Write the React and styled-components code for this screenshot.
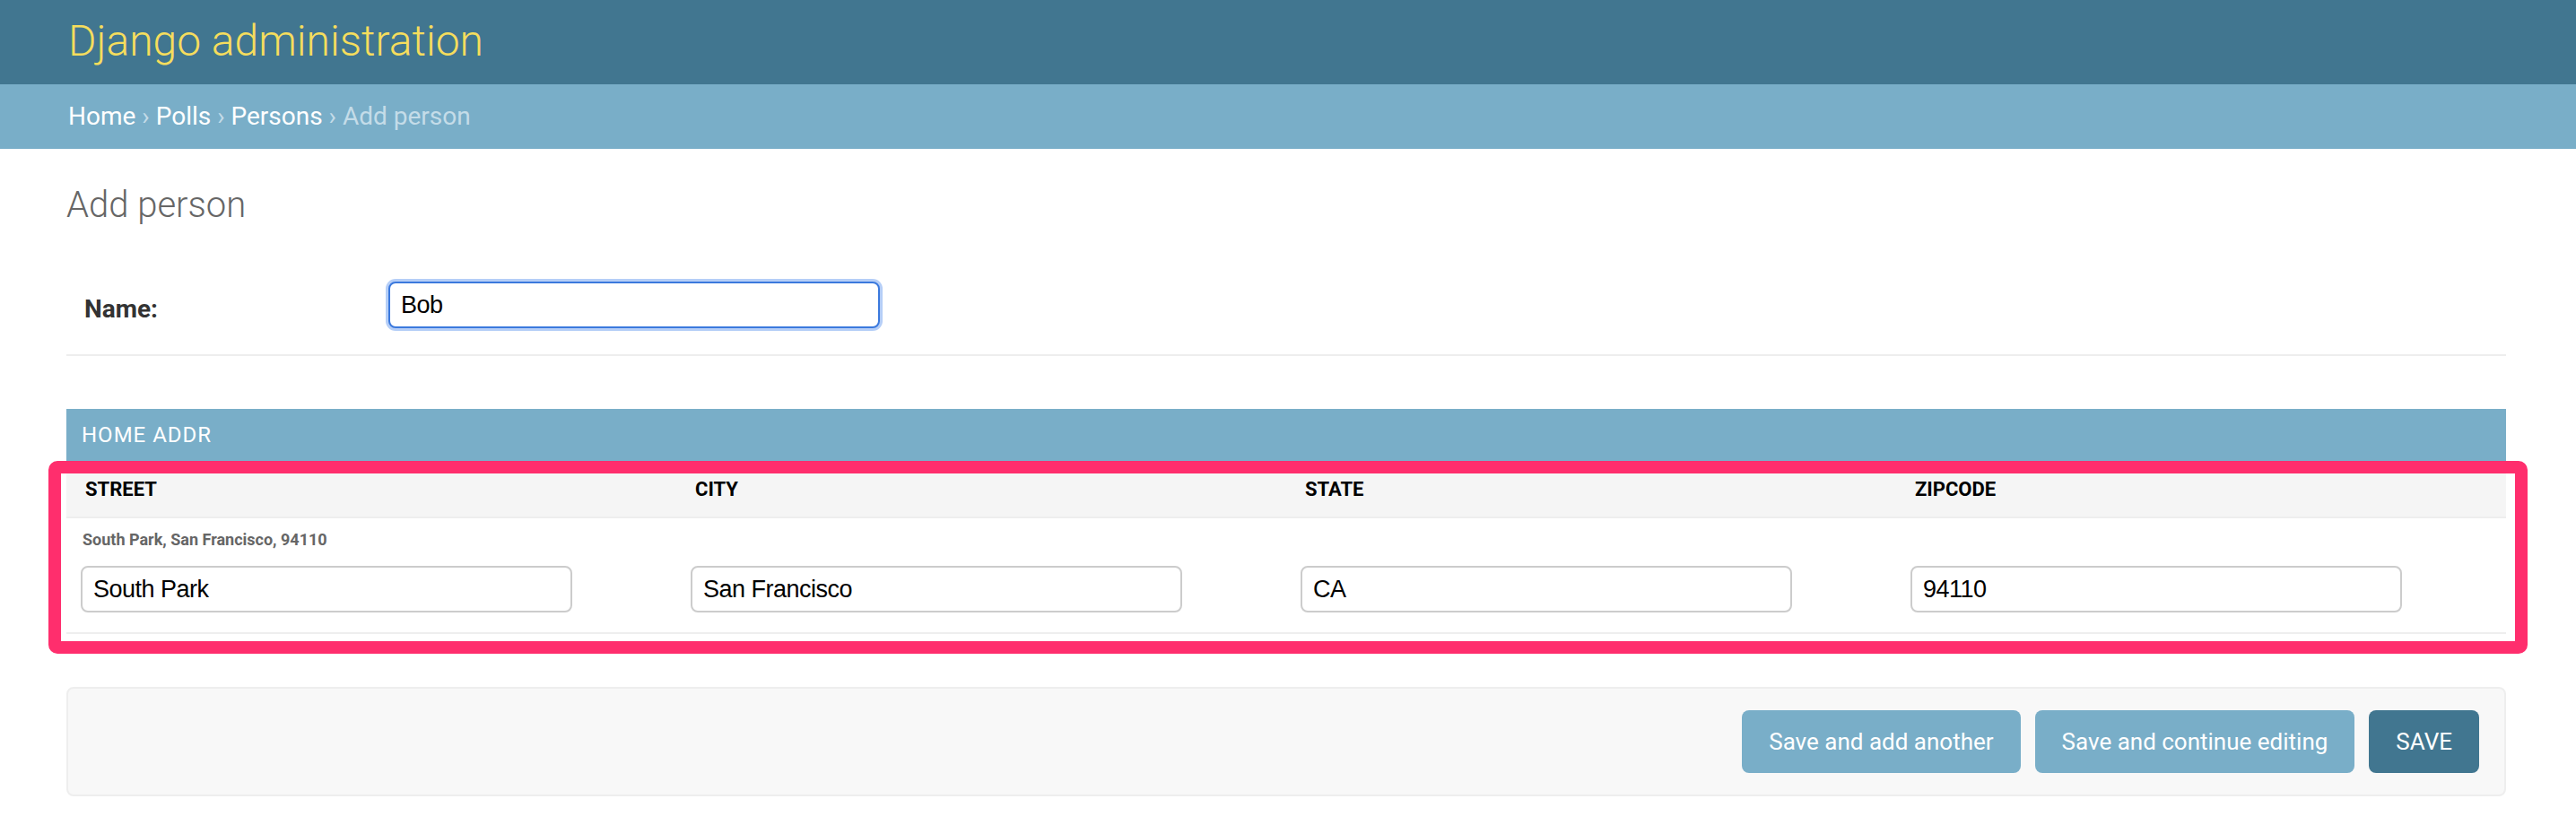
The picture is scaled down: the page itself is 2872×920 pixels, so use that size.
import React from "react";
import styled, { createGlobalStyle } from "styled-components";

const columns = [
  { id: "street", label: "Street", value: "South Park" },
  { id: "city", label: "City", value: "San Francisco" },
  { id: "state", label: "State", value: "CA" },
  { id: "zipcode", label: "Zipcode", value: "94110" },
];

const App = () => {
  return (
    <>
      <GlobalStyle />
      <Header>
        <Branding>Django administration</Branding>
      </Header>
      <Breadcrumbs>
        <Crumb href="#">Home</Crumb> › <Crumb href="#">Polls</Crumb> ›{" "}
        <Crumb href="#">Persons</Crumb> › Add person
      </Breadcrumbs>
      <Content>
        <Title>Add person</Title>
        <FormRow>
          <Label>Name:</Label>
          <TextInput $focused readOnly value="Bob" />
        </FormRow>
        <InlineGroup>
          <GroupTitle>Home addr</GroupTitle>
          <Highlighted>
            <HeadRow>
              {columns.map((col) => (
                <HeadCell key={col.id}>{col.label}</HeadCell>
              ))}
            </HeadRow>
            <BodyRow>
              <Original>South Park, San Francisco, 94110</Original>
              <InputsRow>
                {columns.map((col) => (
                  <Cell key={col.id}>
                    <TextInput readOnly value={col.value} />
                  </Cell>
                ))}
              </InputsRow>
            </BodyRow>
          </Highlighted>
        </InlineGroup>
        <SubmitRow>
          <Button type="button">Save and add another</Button>
          <Button type="button">Save and continue editing</Button>
          <Button type="button" $primary>
            Save
          </Button>
        </SubmitRow>
      </Content>
    </>
  );
};

const GlobalStyle = createGlobalStyle`
  body {
    margin: 0;
    background: #fff;
    font-family: Roboto, "Liberation Sans", sans-serif;
  }
`;

const Header = styled.header`
  height: 94px;
  padding: 0 76px;
  background: #417690;
  display: flex;
  align-items: center;
  box-sizing: border-box;
`;

const Branding = styled.h1`
  margin: 0 0 3px;
  font-size: 48px;
  font-weight: 300;
  color: #f5dd5d;
`;

const Breadcrumbs = styled.nav`
  height: 72px;
  box-sizing: border-box;
  padding: 20px 76px;
  background: #79aec8;
  color: #c4dce8;
  font-size: 28px;
  line-height: 32px;
`;

const Crumb = styled.a`
  color: #fff;
  text-decoration: none;
`;

const Content = styled.main`
  padding: 39px 78px 32px 74px;
`;

const Title = styled.h1`
  margin: 0 0 40px;
  font-size: 40px;
  line-height: 48px;
  font-weight: 300;
  color: #666;
`;

const FormRow = styled.div`
  display: flex;
  align-items: flex-start;
  padding: 21px 20px 29px;
  border-bottom: 2px solid #eee;
`;

const Label = styled.label`
  width: 339px;
  padding-top: 15px;
  font-size: 28px;
  line-height: 32px;
  font-weight: 700;
  color: #333;
`;

const TextInput = styled.input`
  width: 548px;
  height: 52px;
  box-sizing: border-box;
  padding: 0 12px;
  border: 2px solid ${(p) => (p.$focused ? "#3b79dd" : "#ccc")};
  border-radius: 8px;
  box-shadow: ${(p) =>
    p.$focused ? "0 0 0 3px rgba(120, 165, 240, 0.55)" : "none"};
  background: #fff;
  font-family: "Liberation Sans", Arial, sans-serif;
  font-size: 27px;
  letter-spacing: -0.5px;
  color: #000;
  outline: none;
`;

const InlineGroup = styled.section`
  margin: 59px 0;
`;

const GroupTitle = styled.h2`
  margin: 0;
  padding: 16px 17px;
  background: #79aec8;
  color: #fff;
  font-size: 24px;
  line-height: 26px;
  font-weight: 400;
  letter-spacing: 1px;
  text-transform: uppercase;
`;

const Highlighted = styled.div`
  position: relative;

  &::after {
    content: "";
    position: absolute;
    top: 0;
    right: -24px;
    bottom: -22px;
    left: -20px;
    border: 14px solid #ff2e6d;
    border-radius: 10px;
    pointer-events: none;
  }
`;

const HeadRow = styled.div`
  display: grid;
  grid-template-columns: repeat(4, 1fr);
  background: #f5f5f5;
  border-bottom: 2px solid #eee;
`;

const HeadCell = styled.div`
  padding: 21px 20px 19px 21px;
  font-size: 22px;
  line-height: 22px;
  font-weight: 700;
  color: #000;
  text-transform: uppercase;
`;

const BodyRow = styled.div`
  padding: 13px 0 22px;
  border-bottom: 2px solid #eee;
`;

const Original = styled.p`
  margin: 0 0 18px;
  padding-left: 18px;
  font-size: 18px;
  line-height: 22px;
  font-weight: 700;
  color: #666;
`;

const InputsRow = styled.div`
  display: grid;
  grid-template-columns: repeat(4, 1fr);
`;

const Cell = styled.div`
  padding-left: 16px;
`;

const SubmitRow = styled.div`
  display: flex;
  justify-content: flex-end;
  gap: 16px;
  padding: 24px 28px;
  background: #f8f8f8;
  border: 2px solid #eee;
  border-radius: 8px;
`;

const Button = styled.button`
  height: 70px;
  padding: 0 30px;
  border: none;
  border-radius: 8px;
  background: ${(p) => (p.$primary ? "#417690" : "#79aec8")};
  color: #fff;
  font-family: Roboto, "Liberation Sans", sans-serif;
  font-size: 26px;
  font-weight: 400;
  text-transform: ${(p) => (p.$primary ? "uppercase" : "none")};
  cursor: pointer;
`;

export default App;
